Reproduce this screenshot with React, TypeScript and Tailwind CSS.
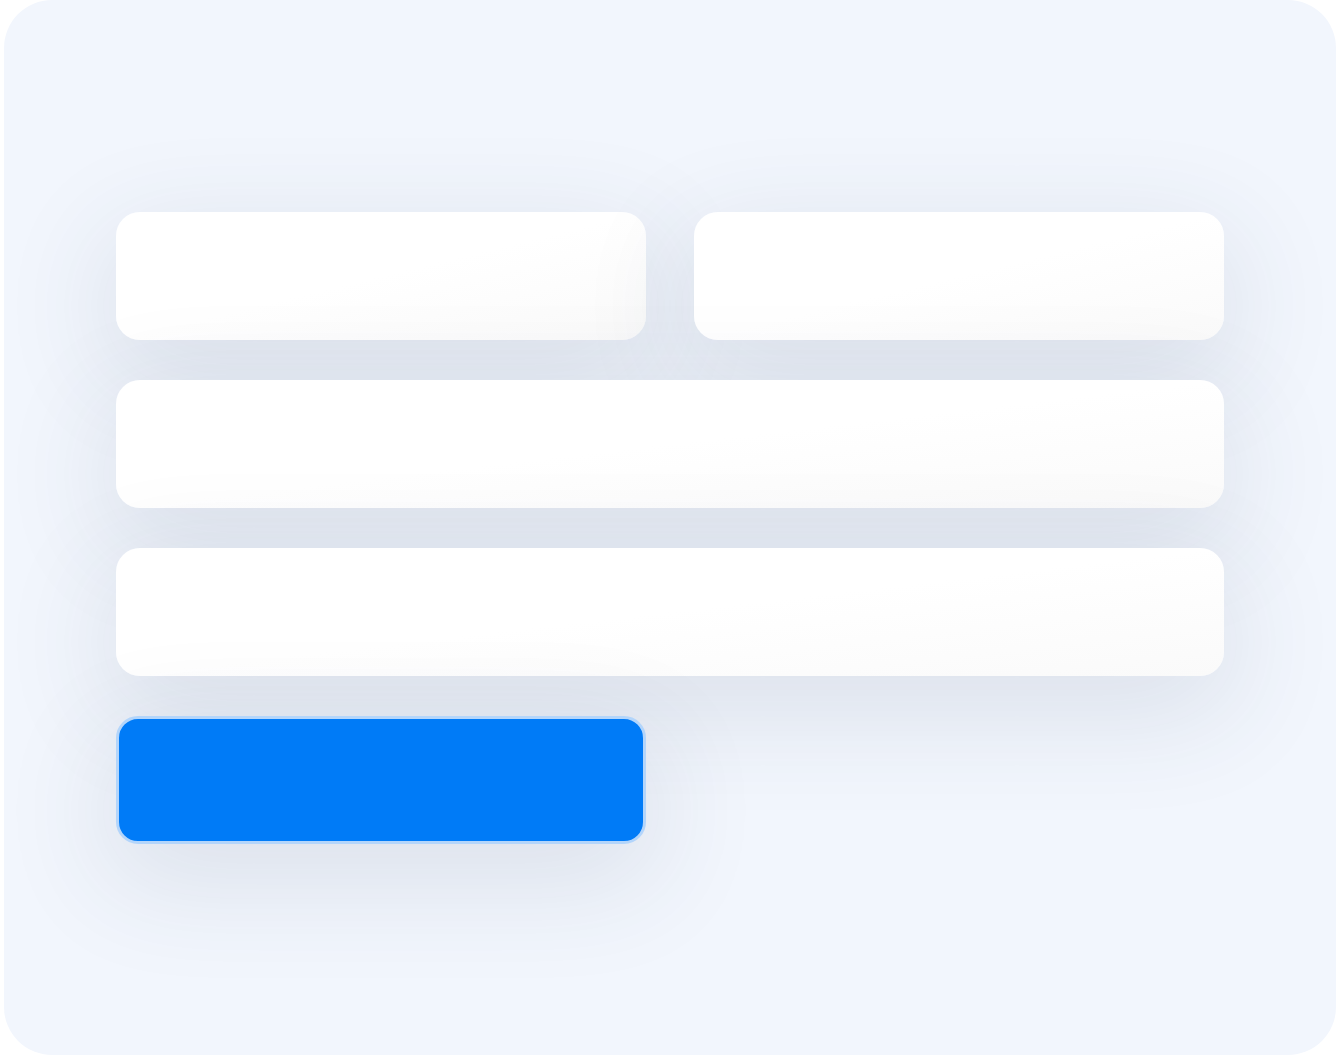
const Field = ({ className }: { className?: string }) => {
    return (
        <div className={`h-32 rounded-3xl bg-linear-to-br from-white via-white to-[#fafafa] shadow-[0_30px_110px_10px_rgba(45,60,90,0.11)] ${className ?? ""}`}></div>
    )
}

const App = () => {
    return (
        <div className="bg-white w-[1341px] h-[1056px]">
            <div className="ml-1 w-[1332px] h-[1055px] rounded-[48px] bg-[#f2f6fd] px-[112px] pt-[212px] flex flex-col gap-10">
                <div className="grid grid-cols-2 gap-12">
                    <Field />
                    <Field />
                </div>
                <Field />
                <Field />
                <div className="grid grid-cols-2 gap-12">
                    <div className="h-32 rounded-[22px] border-[3px] border-[#b3d5fb] bg-[#007bf7] shadow-[0_30px_110px_10px_rgba(45,60,90,0.11)]"></div>
                </div>
            </div>
        </div>
    )
}

export default App;
